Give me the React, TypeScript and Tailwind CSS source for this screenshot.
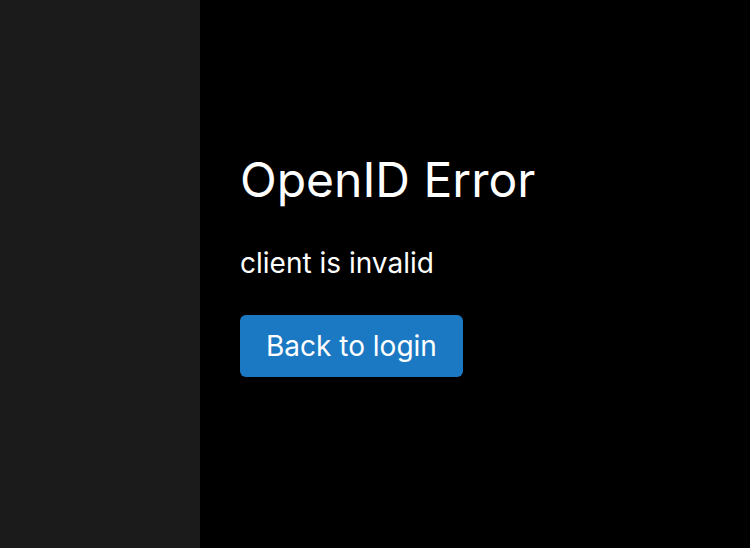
const App = () => {
  return (
    <div className="flex h-[548px] w-full bg-black font-['Inter',sans-serif] text-white">
      {/* sidebar */}
      <aside className="w-[200px] shrink-0 bg-[#1b1b1b]" />

      {/* error panel */}
      <main className="flex flex-1 flex-col justify-center px-10 pb-[20px]">
        <h1 className="text-[48px] leading-[58px] font-normal">OpenID Error</h1>
        <p className="mt-[37px] text-[28px] leading-[34px]">client is invalid</p>
        <div className="mt-[35px]">
          <button className="h-[62px] rounded-[6px] bg-[#1b78c2] px-[26px] text-[28px] text-white">
            Back to login
          </button>
        </div>
      </main>
    </div>
  );
};

export default App;
